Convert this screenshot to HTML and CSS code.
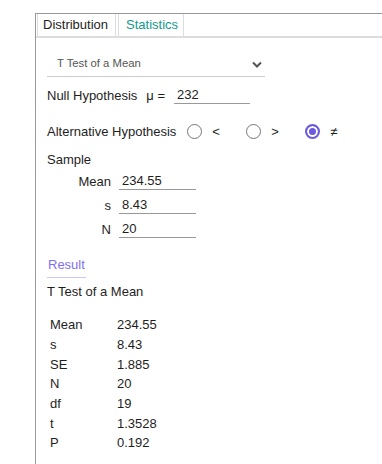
FILE: index.html
```html
<!DOCTYPE html>
<html lang="en">
<head>
  <meta charset="UTF-8">
  <meta name="viewport" content="width=device-width, initial-scale=1.0">
  <title>T Test of a Mean</title>
  <link rel="stylesheet" href="styles.css">
</head>
<body>
  <div class="panel">
    <div class="tabs">
      <div class="tab">Distribution</div>
      <div class="tab active">Statistics</div>
    </div>

    <div class="content">
      <div class="select">
        <span>T Test of a Mean</span>
        <svg width="10" height="7" viewBox="0 0 10 7"><path d="M1 1.5l4 4 4-4" fill="none" stroke="#555" stroke-width="2"/></svg>
      </div>

      <div class="row">
        <span>Null Hypothesis</span>
        <span class="mu">μ =</span>
        <input class="field null" value="232">
      </div>

      <div class="row">
        <span>Alternative Hypothesis</span>
        <label class="opt first"><input type="radio" name="alt"><span>&lt;</span></label>
        <label class="opt"><input type="radio" name="alt"><span>&gt;</span></label>
        <label class="opt"><input type="radio" name="alt" checked><span>≠</span></label>
      </div>

      <div class="sample-title">Sample</div>
      <div class="sample">
        <div class="row"><span class="key">Mean</span><input class="field" value="234.55"></div>
        <div class="row"><span class="key">s</span><input class="field" value="8.43"></div>
        <div class="row"><span class="key">N</span><input class="field" value="20"></div>
      </div>

      <div class="result">Result</div>
      <div class="result-title">T Test of a Mean</div>

      <table class="stats">
        <tr><td>Mean</td><td>234.55</td></tr>
        <tr><td>s</td><td>8.43</td></tr>
        <tr><td>SE</td><td>1.885</td></tr>
        <tr><td>N</td><td>20</td></tr>
        <tr><td>df</td><td>19</td></tr>
        <tr><td>t</td><td>1.3528</td></tr>
        <tr><td>P</td><td>0.192</td></tr>
      </table>
    </div>
  </div>
</body>
</html>
```

FILE: styles.css
```css
body { margin: 0; font-family: "Liberation Sans", Arial, sans-serif; font-size: 13px; color: #1e1e1e; background: #fff; }
.panel { margin: 13px 0 0 35px; border-left: 1px solid #999; border-top: 1px solid #999; min-height: calc(100vh - 14px); }

.tabs { display: flex; border-bottom: 2px solid #ddd; padding-left: 1px; }
.tab { border: 1px solid #ddd; border-top: none; border-bottom: none; line-height: 21px; height: 22px; padding: 0 7px 0 5px; }
.tab.active { color: #139a8b; margin-left: 2px; padding: 0 5px 0 7px; }

.content { padding-left: 11px; }

.select { width: 205px; height: 26px; margin-top: 12px; padding: 0 3px 0 10px; border-bottom: 1px solid #ccc; display: flex; align-items: center; justify-content: space-between; font-size: 11.3px; color: #555; }
.select svg { margin-top: 2px; }

.row { display: flex; align-items: center; height: 24px; }
.content > .row { margin-top: 6px; }
.content > .row + .row { margin-top: 12px; }
.mu { margin-left: 9px; }

.field { font: inherit; color: #1e1e1e; border: none; border-bottom: 1px solid #999; outline: none; height: 18px; padding: 0 0 0 3px; box-sizing: border-box; width: 77px; margin-left: 8px; }
.field.null { width: 76px; margin-left: 9px; }

.opt { display: flex; align-items: center; width: 59px; }
.opt.first { margin-left: 11px; }
.opt span { margin-left: 10px; }
.opt input { appearance: none; margin: 0; width: 15px; height: 15px; border: 1px solid #767676; border-radius: 50%; box-sizing: border-box; }
.opt input:checked { border: 2px solid #6b5bdc; background: #6b5bdc; box-shadow: inset 0 0 0 2px #fff; }

.sample-title { margin-top: 9px; line-height: 15px; }
.sample { margin-top: 2px; }
.sample .key { width: 64px; text-align: right; }

.result { display: inline-block; margin-top: 16px; line-height: 15px; padding: 0 1px 5px 1px; color: #7f70f0; border-bottom: 1px solid #cdc6f7; }
.result-title { margin-top: 6px; line-height: 15px; }

.stats { margin: 16px 0 0 3px; border-collapse: collapse; }
.stats td { padding: 0; height: 19.7px; line-height: 15px; }
.stats td:first-child { width: 67px; }
```
